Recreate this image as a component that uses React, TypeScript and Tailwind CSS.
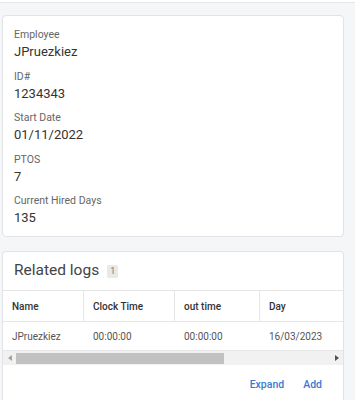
import React from "react";

const fields = [
  { label: "Employee", value: "JPruezkiez" },
  { label: "ID#", value: "1234343" },
  { label: "Start Date", value: "01/11/2022" },
  { label: "PTOS", value: "7" },
  { label: "Current Hired Days", value: "135" },
];

const columns = [
  { title: "Name", value: "JPruezkiez", width: "w-[81px]" },
  { title: "Clock Time", value: "00:00:00", width: "w-[91px]" },
  { title: "out time", value: "00:00:00", width: "w-[85px]" },
  { title: "Day", value: "16/03/2023", width: "w-[180px]" },
];

export default function App() {
  return (
    <div className="h-[400px] w-[355px] overflow-hidden bg-[#f5f6f8] font-['Roboto',sans-serif]">
      {/* Top bar */}
      <div className="h-[3px] border-b border-[#e4e6ea] bg-white" />

      <div className="pl-[2px] pr-[11px]">
        {/* Details card */}
        <div className="mt-[12px] flex flex-col gap-[9.5px] rounded-[4px] border border-[#e2e3e6] bg-white px-[11px] pt-[12px] pb-[10px]">
          {fields.map((f) => (
            <div key={f.label}>
              <div className="text-[10.5px] leading-[14px] text-[#666]">{f.label}</div>
              <div className="mt-[1px] text-[13px] leading-[17px] text-[#333]">{f.value}</div>
            </div>
          ))}
        </div>

        {/* Related logs card */}
        <div className="mt-[14px] overflow-hidden rounded-t-[4px] border border-b-0 border-[#e2e3e6] bg-white">
          <div className="flex h-[39px] items-center gap-[8px] border-b border-[#e6e6e6] px-[11px]">
            <span className="text-[15.5px] text-[#444]">Related logs</span>
            <span className="rounded-[2px] bg-[#e9e9ea] px-[3px] text-[9px] leading-[13px] text-[#777]">1</span>
          </div>

          <div className="overflow-hidden">
            <div className="flex w-max border-b border-[#e6e6e6]">
              {columns.map((c) => (
                <div
                  key={c.title}
                  className={`${c.width} flex h-[30px] shrink-0 items-center border-r border-[#e6e6e6] px-[9px] text-[10px] font-medium text-[#333]`}
                >
                  {c.title}
                </div>
              ))}
            </div>
            <div className="flex w-max border-b border-[#e6e6e6]">
              {columns.map((c) => (
                <div
                  key={c.title}
                  className={`${c.width} flex h-[28px] shrink-0 items-center px-[9px] text-[10px] text-[#555]`}
                >
                  {c.value}
                </div>
              ))}
            </div>
          </div>

          {/* Scrollbar */}
          <div className="flex h-[14px] items-center bg-[#f1f1f1]">
            <div className="flex w-[13px] items-center justify-center">
              <span className="h-0 w-0 border-y-[3px] border-r-[4px] border-y-transparent border-r-[#a3a3a3]" />
            </div>
            <div className="h-[11px] w-[208px] bg-[#c1c1c1]" />
            <div className="flex-1" />
            <div className="flex w-[13px] items-center justify-center">
              <span className="h-0 w-0 border-y-[3px] border-l-[4px] border-y-transparent border-l-[#505050]" />
            </div>
          </div>

          <div className="flex h-[40px] items-center justify-end gap-[19px] pr-[21px]">
            <button className="text-[10.5px] font-medium text-[#3a7bd5]">Expand</button>
            <button className="text-[10.5px] font-medium text-[#3a7bd5]">Add</button>
          </div>
        </div>
      </div>
    </div>
  );
}
